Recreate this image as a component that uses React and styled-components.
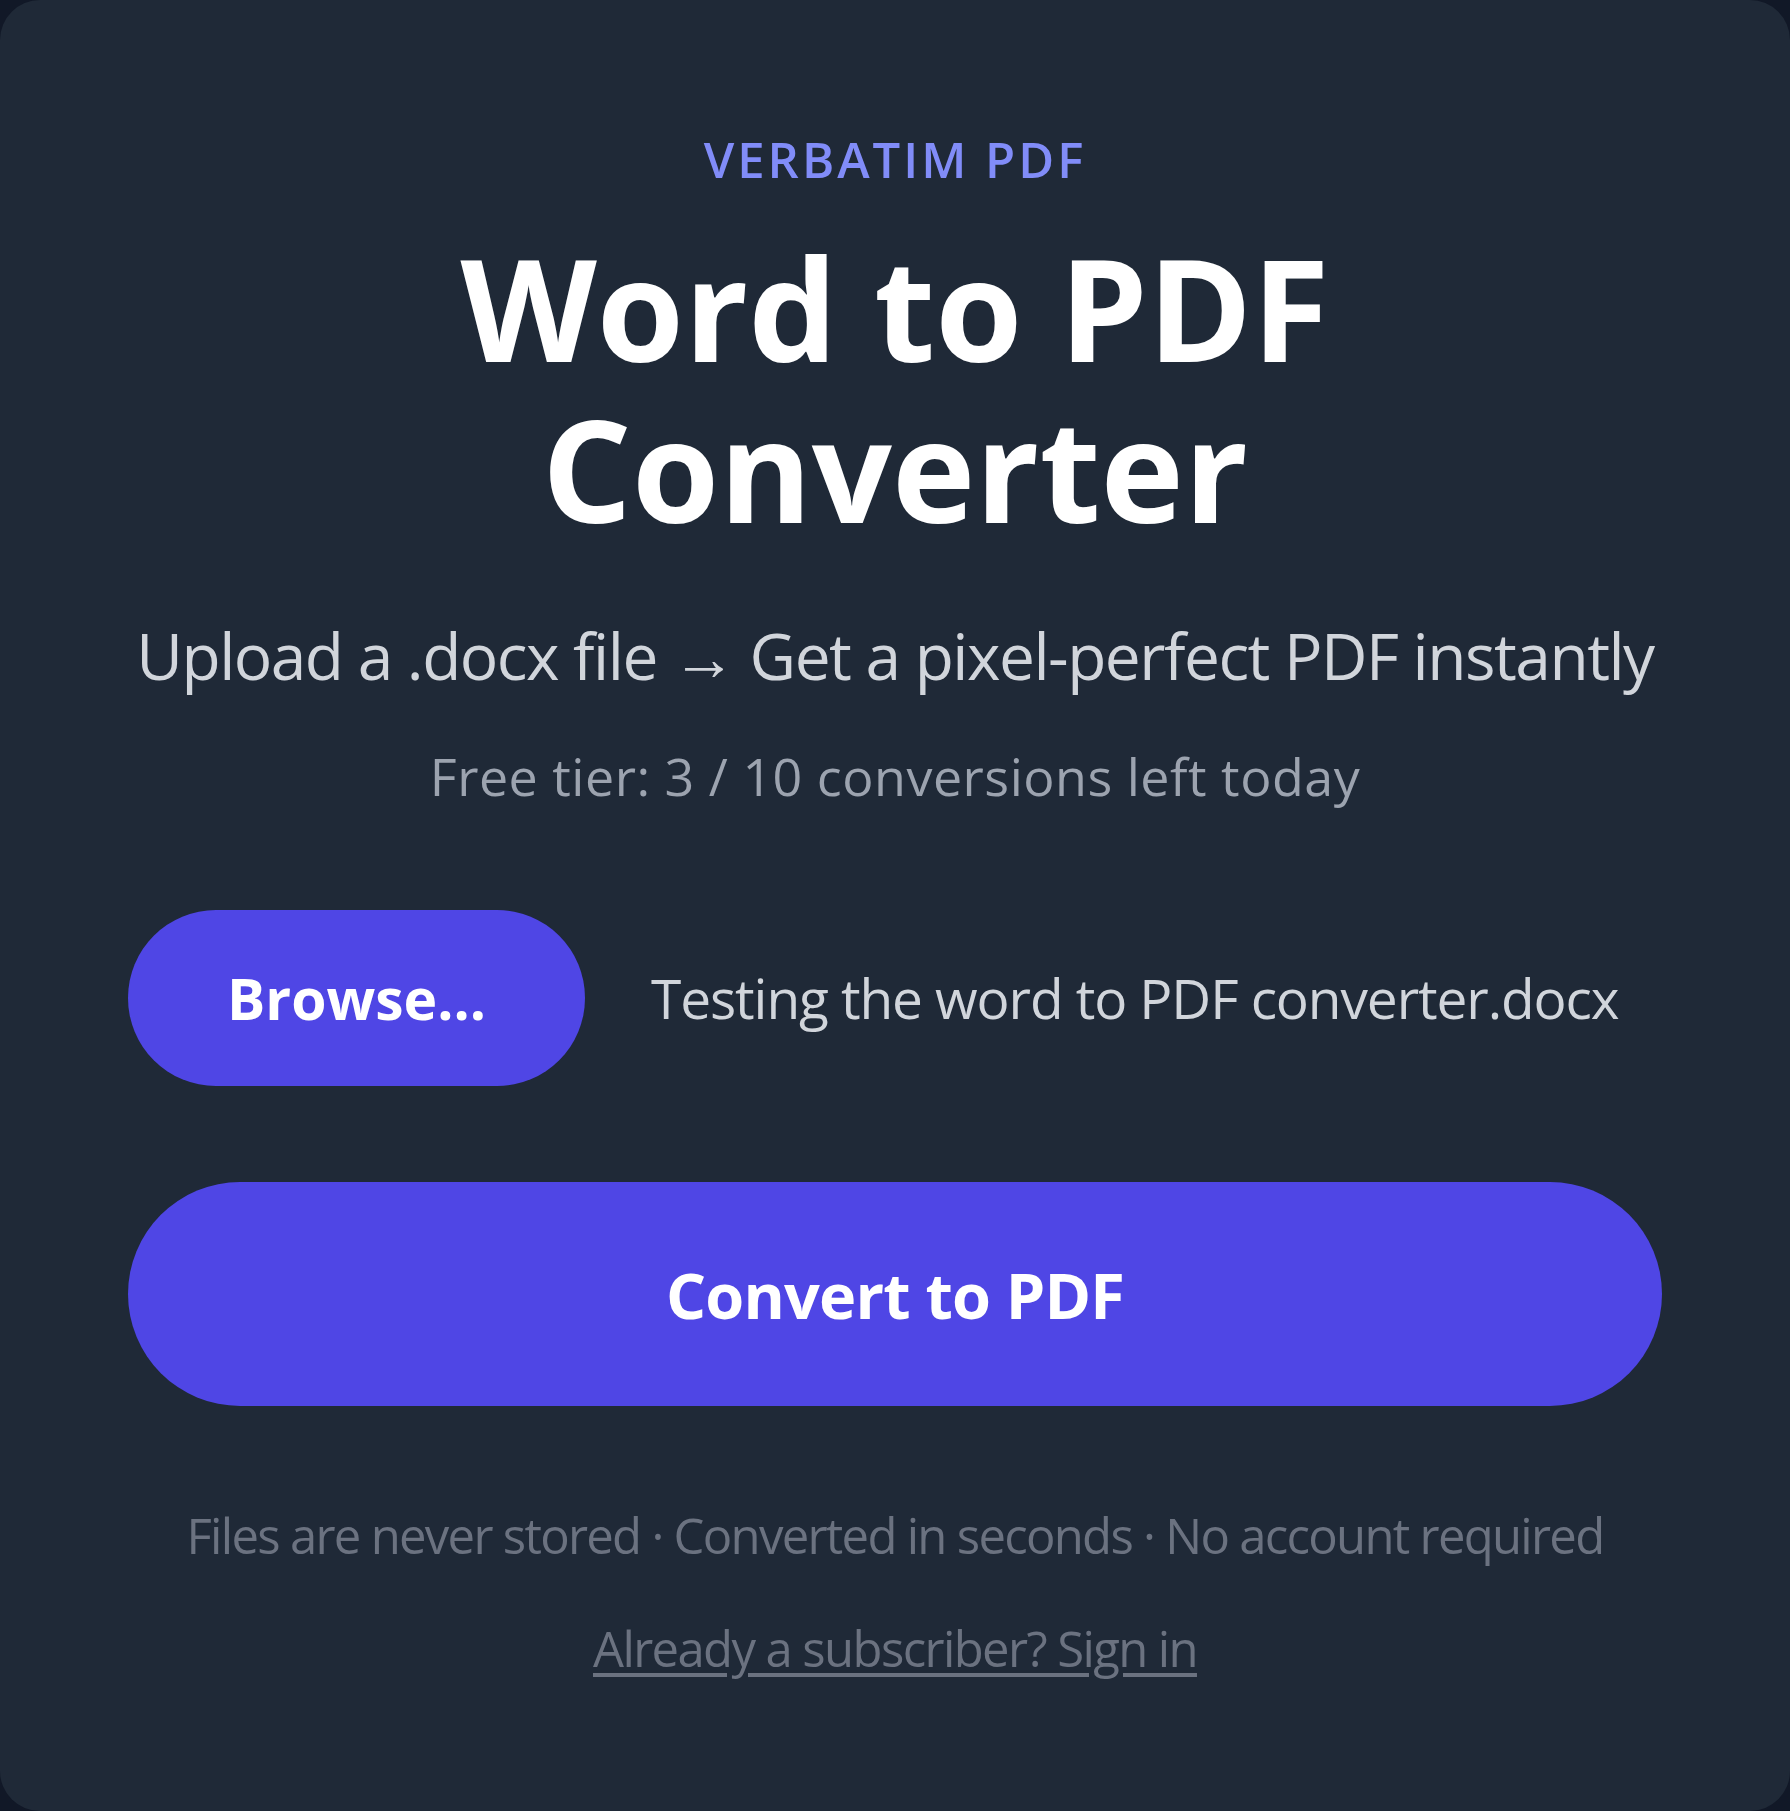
import React from "react";
import styled, { createGlobalStyle } from "styled-components";

const GlobalStyle = createGlobalStyle`
  * {
    box-sizing: border-box;
  }

  body {
    margin: 0;
    background: #111827;
    font-family: "Open Sans", "Noto Sans", sans-serif;
  }
`;

const App = () => {
  return (
    <>
      <GlobalStyle />
      <Card>
        <Eyebrow>VERBATIM PDF</Eyebrow>
        <Title>
          Word to PDF
          <br />
          Converter
        </Title>
        <Subtitle>Upload a .docx file → Get a pixel-perfect PDF instantly</Subtitle>
        <Quota>Free tier: 3 / 10 conversions left today</Quota>

        <UploadRow>
          <BrowseButton type="button">Browse...</BrowseButton>
          <FileName>Testing the word to PDF converter.docx</FileName>
        </UploadRow>

        <ConvertButton type="button">Convert to PDF</ConvertButton>

        <Footnote>
          Files are never stored · Converted in seconds · No account required
        </Footnote>
        <SignIn href="#">Already a subscriber? Sign in</SignIn>
      </Card>
    </>
  );
};

export default App;

const Card = styled.div`
  display: flex;
  flex-direction: column;
  align-items: center;
  width: 1790px;
  min-height: 1811px;
  padding: 129px 128px 0;
  background: #1f2937;
  border-radius: 40px;
  text-align: center;
`;

const Eyebrow = styled.div`
  margin: 0;
  font-size: 49px;
  line-height: 60px;
  font-weight: 600;
  letter-spacing: 3px;
  color: #818cf8;
`;

const Title = styled.h1`
  margin: 38px 0 0;
  font-size: 141px;
  line-height: 161px;
  font-weight: 700;
  color: #ffffff;
`;

const Subtitle = styled.p`
  margin: 68px 0 0;
  font-size: 64px;
  line-height: 78px;
  font-weight: 400;
  letter-spacing: -1.5px;
  white-space: nowrap;
  color: #d1d5db;
`;

const Quota = styled.p`
  margin: 49px 0 0;
  font-size: 52px;
  line-height: 64px;
  letter-spacing: 0.5px;
  color: #9ca3af;
`;

const UploadRow = styled.div`
  display: flex;
  align-items: center;
  gap: 66px;
  align-self: stretch;
  margin-top: 102px;
`;

const BrowseButton = styled.button`
  display: flex;
  align-items: center;
  justify-content: center;
  width: 457px;
  height: 176px;
  border: none;
  border-radius: 88px;
  background: #4f46e5;
  color: #ffffff;
  font-family: inherit;
  font-size: 57px;
  font-weight: 700;
  cursor: pointer;
`;

const FileName = styled.span`
  font-size: 55px;
  line-height: 66px;
  letter-spacing: -1.1px;
  white-space: nowrap;
  color: #d1d5db;
`;

const ConvertButton = styled.button`
  align-self: stretch;
  height: 224px;
  margin-top: 96px;
  border: none;
  border-radius: 112px;
  background: #4f46e5;
  color: #ffffff;
  font-family: inherit;
  font-size: 63px;
  font-weight: 700;
  letter-spacing: -0.8px;
  cursor: pointer;
`;

const Footnote = styled.p`
  margin: 99px 0 0;
  font-size: 49px;
  line-height: 60px;
  letter-spacing: -1.7px;
  white-space: nowrap;
  color: #6b7280;
`;

const SignIn = styled.a`
  margin-top: 53px;
  font-size: 49px;
  line-height: 60px;
  letter-spacing: -1.6px;
  color: #6b7280;
  text-decoration: underline;
  text-underline-offset: 6px;
`;
